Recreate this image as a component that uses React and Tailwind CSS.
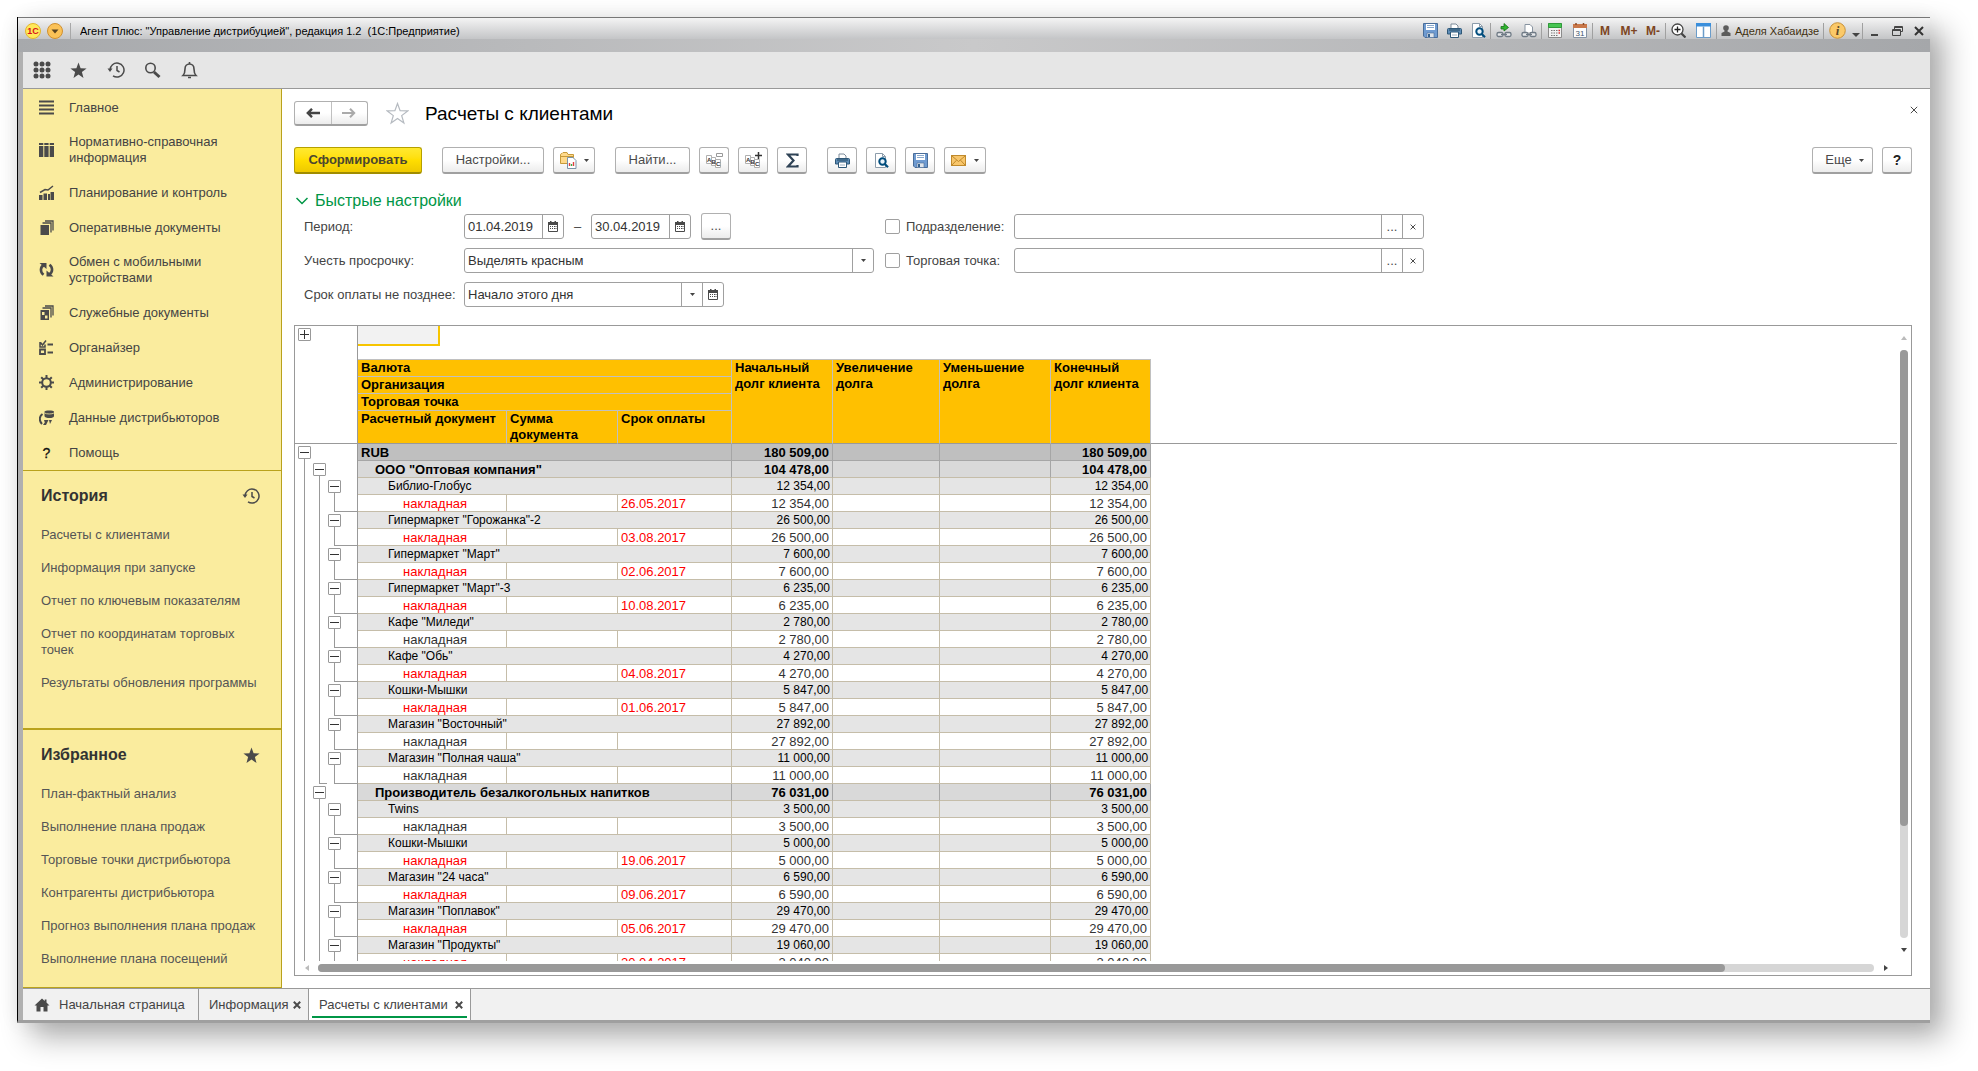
import { useState } from "react";

const menuItems = [
  { icon: "lines", label: "Главное" },
  { icon: "columns", label: "Нормативно-справочная информация" },
  { icon: "chart", label: "Планирование и контроль" },
  { icon: "docs", label: "Оперативные документы" },
  { icon: "sync", label: "Обмен с мобильными устройствами" },
  { icon: "service", label: "Служебные документы" },
  { icon: "organizer", label: "Органайзер" },
  { icon: "gear", label: "Администрирование" },
  { icon: "distributor", label: "Данные дистрибьюторов" },
  { icon: "help", label: "Помощь" },
];

const historyLinks = [
  "Расчеты с клиентами",
  "Информация при запуске",
  "Отчет по ключевым показателям",
  "Отчет по координатам торговых точек",
  "Результаты обновления программы",
];

const favoriteLinks = [
  "План-фактный анализ",
  "Выполнение плана продаж",
  "Торговые точки дистрибьютора",
  "Контрагенты дистрибьютора",
  "Прогноз выполнения плана продаж",
  "Выполнение плана посещений",
];

// date = overdue document, printed in red
const organizations = [
  {
    name: 'ООО "Оптовая компания"',
    sum: "104 478,00",
    points: [
      { name: "Библио-Глобус", sum: "12 354,00", date: "26.05.2017" },
      { name: 'Гипермаркет "Горожанка"-2', sum: "26 500,00", date: "03.08.2017" },
      { name: 'Гипермаркет "Март"', sum: "7 600,00", date: "02.06.2017" },
      { name: 'Гипермаркет "Март"-3', sum: "6 235,00", date: "10.08.2017" },
      { name: 'Кафе "Миледи"', sum: "2 780,00" },
      { name: 'Кафе "Обь"', sum: "4 270,00", date: "04.08.2017" },
      { name: "Кошки-Мышки", sum: "5 847,00", date: "01.06.2017" },
      { name: 'Магазин "Восточный"', sum: "27 892,00" },
      { name: 'Магазин "Полная чаша"', sum: "11 000,00" },
    ],
  },
  {
    name: "Производитель безалкогольных напитков",
    sum: "76 031,00",
    open: true,
    points: [
      { name: "Twins", sum: "3 500,00" },
      { name: "Кошки-Мышки", sum: "5 000,00", date: "19.06.2017" },
      { name: 'Магазин "24 часа"', sum: "6 590,00", date: "09.06.2017" },
      { name: 'Магазин "Поплавок"', sum: "29 470,00", date: "05.06.2017" },
      { name: 'Магазин "Продукты"', sum: "19 060,00", docSum: "3 040,00", date: "20.04.2017" },
    ],
  },
];

// ================= ICONS =================
const StarIcon = ({ size = 17 }) => (
  <svg width={size} height={size} viewBox="0 0 17 17" fill="#4a4a4a">
    <path d="M8.5 0.5 10.6 6.2 16.6 6.4 11.9 10.1 13.5 16 8.5 12.6 3.5 16 5.1 10.1 0.4 6.4 6.4 6.2Z" />
  </svg>
);

const HistoryIcon = () => (
  <svg width="18" height="18" viewBox="0 0 18 18" fill="none" stroke="#4a4a4a" strokeWidth="1.5">
    <path d="M3 9.2A7 7 0 1 1 6 14.8" />
    <path d="M10 5v4.5l2.5 1.5" />
    <path d="M0.5 7.5h5L3 11Z" fill="#4a4a4a" stroke="none" />
  </svg>
);

const AppsIcon = () => (
  <svg width="18" height="18" viewBox="0 0 18 18" fill="#4a4a4a">
    {[3, 9, 15].map((y) =>
      [3, 9, 15].map((x) => <circle key={`${x}${y}`} cx={x} cy={y} r="2.5" />),
    )}
  </svg>
);

const SearchIcon = () => (
  <svg width="17" height="17" viewBox="0 0 17 17" fill="none" stroke="#4a4a4a">
    <circle cx="6.5" cy="6" r="4.7" strokeWidth="1.6" />
    <path d="m10 10 5.5 5" strokeWidth="3" />
  </svg>
);

const BellIcon = () => (
  <svg width="17" height="18" viewBox="0 0 17 18" fill="none" stroke="#4a4a4a" strokeWidth="1.6">
    <path d="M2 14.5h13c-1.8-1.8-2-3.5-2-6.5C13 4.8 11 3 8.5 3S4 4.8 4 8c0 3-.2 4.7-2 6.5Z" />
    <path d="M7 16.5h3M8.5 1v2" />
  </svg>
);

const HomeIcon = () => (
  <svg width="16" height="14" viewBox="0 0 16 14" fill="#4a4a4a">
    <path d="M8 0.5 0.5 7.5h2v6h4V9h3v4.5h4v-6h2l-3-3v-3h-1.8v1.4Z" />
  </svg>
);

const MenuIcon = ({ name }) => {
  const icons = {
    lines: <path d="M0 1.5h15M0 5.5h15M0 9.5h15M0 13.5h15" stroke="#4a4a4a" strokeWidth="2" />,
    columns: (
      <path d="M0 1h4.3v2H0zM5.3 1h4.3v2H5.3zM10.7 1H15v2h-4.3zM0 4h4.3v11H0zM5.3 4h4.3v11H5.3zM10.7 4H15v11h-4.3z" />
    ),
    chart: (
      <>
        <path d="M0 10h3.5v5H0zM4.500 8.500H8V15H4.500zM9 9h2v6H9zM11.500 7H15v8h-3.500z" />
        <path d="M1 7.500 6 4.500l3 .5L14 1" fill="none" stroke="#4a4a4a" strokeWidth="1.500" />
      </>
    ),
    docs: (
      <>
        <path d="M1.5 5H10v10H1.500z" />
        <path d="M3.500 3H12v9.500M6 1h8v9.500" fill="none" stroke="#4a4a4a" strokeWidth="1.300" />
      </>
    ),
    service: (
      <>
        <path d="M1.500 5H10v10H1.500zM3 7v3h2.500V7zM6 10.500v3h2.500v-3z" fillRule="evenodd" />
        <path d="M3.500 3H12v9.500M6 1h8v9.500" fill="none" stroke="#4a4a4a" strokeWidth="1.300" />
      </>
    ),
    sync: (
      <>
        <path d="M5 3C1 5 1 10 4.500 12.800M10 12.500C14 10.500 14 5.500 10.500 2.800" fill="none" stroke="#4a4a4a" strokeWidth="2.600" />
        <path d="M0.500 1h7v6zM14.500 14.500h-7v-6z" />
      </>
    ),
    organizer: (
      <>
        <path d="M1 9.500h5v4.500H1zM8.500 4.500H14M8.500 12.500H14" fill="none" stroke="#4a4a4a" strokeWidth="1.800" />
        <path d="M1 2v5h5V4.500M1.500 2.500l2 2.500L7 0.500" fill="none" stroke="#4a4a4a" strokeWidth="1.500" />
      </>
    ),
    gear: (
      <>
        <circle cx="7.500" cy="7.500" r="4.300" fill="none" stroke="#4a4a4a" strokeWidth="2" />
        <path
          d="M7.500 0v3M7.500 12v3M0 7.500h3M12 7.500h3M2.200 2.200l2.100 2.100M10.700 10.700l2.100 2.100M12.800 2.200l-2.100 2.100M4.300 10.700l-2.100 2.100"
          stroke="#4a4a4a"
          strokeWidth="2"
        />
      </>
    ),
    distributor: (
      <>
        <path d="M5.500 1.500C5.500 0 15 0 15 1.500V6c0 1.500-2 2-4.500 2s-5-.5-5-2z" />
        <path d="M5.500 3c2 1.300 7.500 1.300 9.500 0" fill="none" stroke="#faec9e" strokeWidth="0.800" />
        <path d="M3.500 4C0 6.500 0 11 3 14" fill="none" stroke="#4a4a4a" strokeWidth="2" />
        <path d="M5 10h4.500L7 15H4l1.800-2.500zM10 10h3l-2 4z" />
      </>
    ),
    help: (
      <text x="7.500" y="12.500" textAnchor="middle" fontSize="14" fill="#111" stroke="#111" strokeWidth="0.300">
        ?
      </text>
    ),
  };
  return (
    <svg width="15" height="16" viewBox="0 0 15 16" fill="#4a4a4a" className="shrink-0">
      {icons[name]}
    </svg>
  );
};

const SaveIcon = () => (
  <svg width="15" height="15" viewBox="0 0 15 15">
    <path d="M0.500 0.500h14v14H2l-1.500-1.500z" fill="#6f9bd1" stroke="#4a6d99" />
    <path d="M3 1h9v6H3z" fill="#fff" />
    <path d="M4 2.500h7M4 4.500h7" stroke="#8aa9cc" />
    <path d="M4 10h7v4.500H4z" fill="#dfe5ec" stroke="#4a6d99" strokeWidth="0.600" />
    <path d="M5 11h2v3H5z" fill="#35618f" />
  </svg>
);

const PrintIcon = () => (
  <svg width="15" height="15" viewBox="0 0 15 15">
    <path d="M4 6V1h5l2 2v3" fill="#fff" stroke="#7c8b9a" />
    <path d="M0.500 6.500c0-.6.4-1 1-1h12c.6 0 1 .4 1 1V11h-14z" fill="#5f8db8" stroke="#2f5878" />
    <path d="M2 7h11" stroke="#24485f" />
    <path d="M3.500 9h8v5.500h-8z" fill="#fff" stroke="#2f5878" />
    <path d="M5 12h5" stroke="#9db0c0" />
  </svg>
);

const PreviewIcon = () => (
  <svg width="15" height="15" viewBox="0 0 15 15">
    <path d="M1.500 0.500h7l3 3v11h-10z" fill="#fff" stroke="#8c9cab" />
    <path d="M8.500 0.500v3h3" fill="none" stroke="#8c9cab" />
    <circle cx="8.500" cy="8.500" r="3.200" fill="#eaf4fb" stroke="#004d7d" strokeWidth="2" />
    <path d="m10.800 11 3.200 3.200" stroke="#004d7d" strokeWidth="2.200" />
  </svg>
);

const FolderIcon = () => (
  <svg width="17" height="17" viewBox="0 0 17 17">
    <path d="M0.500 3c0-1 .5-1.500 1.500-1.500L3 0.500h4l1 2h5.500v9h-13z" fill="#ffd98a" stroke="#c79a3a" />
    <path d="M1 4.500h12" stroke="#c79a3a" />
    <path d="M7.500 5.500H13l3 3v8H7.500z" fill="#fff" stroke="#7b93a8" />
    <path d="M9.500 14v-3" stroke="#e04040" strokeWidth="1.400" />
    <path d="M11.500 14v-2" stroke="#3bab4a" strokeWidth="1.400" />
    <path d="M13.500 14v-4" stroke="#e04040" strokeWidth="1.400" />
  </svg>
);

const MailIcon = () => (
  <svg width="15" height="11" viewBox="0 0 15 11" fill="none">
    <rect x="0.500" y="0.500" width="14" height="10" fill="#f8c66b" stroke="#c08a2c" />
    <path d="m1 1 6.500 5.500L14 1M1 10l4.500-4.800M14 10 9.500 5.200" stroke="#c08a2c" />
  </svg>
);

const AbcIcon = ({ plus }) => (
  <svg width="17" height="17" viewBox="0 0 17 17" fill="none">
    <path d="M0.500 3.500h5v8h-5z" fill="#fff" stroke="#b0b0b0" />
    <path d="M5.500 5.500h4v8h-4z" fill="#fff" stroke="#b0b0b0" />
    <path d="M9.500 7.500h5v8h-5z" fill="#fff" stroke="#b0b0b0" />
    <g fill="#333" fontSize="6" fontWeight="bold">
      <text x="1" y="10">A</text>
      <text x="5.500" y="12">B</text>
      <text x="10" y="14">C</text>
    </g>
    {plus ? (
      <path d="M10 3.500h7M13.500 0v7" stroke="#333" strokeWidth="1.500" />
    ) : (
      <path d="M10.500 1.500h6v3h-6z" fill="#fff" stroke="#999" />
    )}
  </svg>
);

const SigmaIcon = () => (
  <svg width="13" height="15" viewBox="0 0 13 15" fill="none" stroke="#2f4356" strokeWidth="2.200">
    <path d="M11.500 3V1.500H2l5.500 6-5.500 6h9.500V12" />
  </svg>
);

const CalendarIcon = () => (
  <svg width="10" height="11" viewBox="0 0 10 11" fill="#4a4a4a">
    <path d="M0.500 2.500v8h9v-8" fill="none" stroke="#4a4a4a" />
    <path d="M0 1h10v3H0zM2 0h1.500v2H2zM6.500 0H8v2H6.500z" />
    <path d="M2 5h1v1H2zM4 5h1v1H4zM6 5h1v1H6zM2 7h1v1H2zM4 7h1v1H4zM6 7h1v1H6zM7.500 5h1v1h-1zM7.500 7h1v1h-1z" />
  </svg>
);

const CaretIcon = () => (
  <svg width="5" height="3" viewBox="0 0 5 3" fill="#444">
    <path d="M0 0h5L2.500 3Z" />
  </svg>
);

const CrossIcon = ({ size = 7, color = "#4a4a4a", weight = 1.5 }) => (
  <svg width={size} height={size} viewBox="0 0 10 10" stroke={color} strokeWidth={(weight * 10) / size}>
    <path d="m1 1 8 8M9 1 1 9" />
  </svg>
);

const LinkIcon = ({ arrow }) => (
  <svg width="16" height="16" viewBox="0 0 16 16" fill="none">
    {arrow ? (
      <path d="M5 3.500h3v-3l4.500 4L8 8V6H5z" fill="#2fb52f" stroke="#177017" strokeWidth="0.800" />
    ) : (
      <path d="M4 9V1.500h5L11.500 4v5" fill="#fff" stroke="#8793a0" />
    )}
    <rect x="1" y="9.500" width="6" height="4" rx="1.500" fill="#e8eaec" stroke="#6f7a85" strokeWidth="1.300" />
    <rect x="9" y="9.500" width="6" height="4" rx="1.500" fill="#e8eaec" stroke="#6f7a85" strokeWidth="1.300" />
    <path d="M5 11.500h6" stroke="#6f7a85" strokeWidth="1.300" />
  </svg>
);

const CalcIcon = () => (
  <svg width="14" height="15" viewBox="0 0 14 15">
    <path d="M0.500 0.500h13v14h-13z" fill="#f2f2f2" stroke="#8b8b8b" />
    <path d="M0.500 0.500h13v4h-13z" fill="#47c552" stroke="#2f9a39" />
    <path d="M3 7.500h7M3 10h7M3 12.500h7" stroke="#777" strokeDasharray="1.500 1" />
    <path d="M10.500 7.500H12M10.500 10H12" stroke="#e03030" strokeWidth="1.300" />
  </svg>
);

const DateIcon = () => (
  <svg width="14" height="15" viewBox="0 0 14 15">
    <path d="M0.500 1.500h13v13h-13z" fill="#fdfdfd" stroke="#8593a3" />
    <path d="M0 1h14v4H0z" fill="#c9784a" />
    <path d="M3 0v2M10.500 0v2" stroke="#8a4a25" strokeWidth="1.500" />
    <text x="7" y="12.500" fontSize="8" textAnchor="middle" fill="#3f566e">31</text>
  </svg>
);

const ZoomIcon = () => (
  <svg width="15" height="15" viewBox="0 0 15 15" fill="none" stroke="#444">
    <circle cx="6.500" cy="6.500" r="5.500" fill="#fff" strokeWidth="1.300" />
    <path d="M3.500 6.500h6M6.500 3.500v6" stroke="#222" strokeWidth="1.300" />
    <path d="m10.500 10.500 4 4" strokeWidth="2.200" />
  </svg>
);

const PanesIcon = () => (
  <svg width="15" height="15" viewBox="0 0 15 15">
    <path d="M0.500 0.500h14v14h-14z" fill="#fff" stroke="#6b9cc9" />
    <path d="M0 0h15v3.500H0z" fill="#3a8fdc" />
    <path d="M7.500 3.500v11" stroke="#6b9cc9" strokeWidth="1.500" />
  </svg>
);

const UserIcon = () => (
  <svg width="10" height="11" viewBox="0 0 10 11" fill="#5c5c5c">
    <circle cx="5" cy="3" r="2.800" />
    <path d="M3.500 5h3v1.500l3 1.500v3h-9V8l3-1.500z" />
  </svg>
);

// ================= SMALL CONTROLS =================
const TitleButton = ({ label, className = "w-6", children }) => (
  <button aria-label={label} className={`flex h-5 items-center justify-center ${className}`}>
    {children}
  </button>
);

const TitleSeparator = () => <span className="h-4 w-px bg-[#a0a0a0]" />;

const ToolButton = ({ label, className = "w-[30px]", children }) => (
  <button
    aria-label={label}
    className={`flex h-[27px] shrink-0 items-center justify-center rounded-[3px] border border-b-2 border-[#b0b0b0] border-b-[#a0a0a0] bg-linear-to-b from-white from-50% to-[#ececec] text-[#4a4a4a] ${className}`}
  >
    {children}
  </button>
);

const FieldButton = ({ label, children }) => (
  <button
    aria-label={label}
    className="flex w-[21px] shrink-0 items-center justify-center border-l border-[#a0a0a0] text-[#4a4a4a]"
  >
    {children}
  </button>
);

const fieldBox = "flex h-[25px] rounded-[3px] border border-[#a0a0a0] bg-white";

const DateField = ({ id, label, value }) => (
  <div className={`${fieldBox} w-[100px]`}>
    <input
      id={id}
      aria-label={label}
      defaultValue={value}
      className="w-0 min-w-0 flex-1 px-[3px] text-[#333] outline-none"
    />
    <FieldButton label="Календарь">
      <CalendarIcon />
    </FieldButton>
  </div>
);

const CheckFilter = ({ id, label }) => {
  const [checked, setChecked] = useState(false);

  return (
    <div className="flex h-[25px] items-center">
      <input
        id={id}
        type="checkbox"
        checked={checked}
        onChange={() => setChecked(!checked)}
        className="mr-1.5 size-[15px] appearance-none rounded-[2px] border border-[#a0a0a0] checked:bg-[#009646]"
      />
      <label htmlFor={id} className="w-[108px]">
        {label}
      </label>
      <div className={`${fieldBox} w-[410px]`}>
        <input aria-label={label} className="min-w-0 flex-1 px-[3px] outline-none" />
        <FieldButton label="Выбрать">...</FieldButton>
        <FieldButton label="Очистить">
          <CrossIcon size={6} weight={1} />
        </FieldButton>
      </div>
    </div>
  );
};

const SideLinks = ({ title, icon, links, className = "" }) => (
  <section className={`min-h-0 flex-1 border-[#b9a21c] px-[18px] pt-[15px] ${className}`}>
    <div className="flex items-center justify-between">
      <h2 className="text-base leading-5 font-bold text-[#333]">{title}</h2>
      <span className="flex w-6 justify-center">{icon}</span>
    </div>
    <ul className="mt-[21px] space-y-[17px]">
      {links.map((link) => (
        <li key={link} className="leading-4">
          <a href="#" className="block text-[#555]">
            {link}
          </a>
        </li>
      ))}
    </ul>
  </section>
);

// ================= REPORT TREE =================
const ToggleBox = ({ plus }) => (
  <button
    aria-label={plus ? "Развернуть" : "Свернуть"}
    className="flex size-[13px] shrink-0 items-center justify-center rounded-[1px] border border-[#999] bg-white"
  >
    <svg width="9" height="9" viewBox="0 0 9 9" stroke="#333">
      <path d={plus ? "M0 4.500h9M4.500 0v9" : "M0 4.500h9"} />
    </svg>
  </button>
);

// one 15px slot per level: box, line, corner or nothing
const Tree = ({ slots }) => (
  <div className="flex h-[17px] pl-[2px]">
    {slots.map((slot, i) => {
      if (slot === "box")
        return (
          <div key={i} className="flex w-[15px] flex-col items-center pt-[2px]">
            <ToggleBox />
            <span className="w-px flex-1 bg-[#999]" />
          </div>
        );
      if (slot === "line")
        return (
          <div key={i} className="flex w-[15px] justify-center">
            <span className="w-px bg-[#999]" />
          </div>
        );
      return (
        <div key={i} className={i === 2 ? "flex flex-1 pl-[7px]" : "flex w-[15px] pl-[7px]"}>
          <span className="flex-1 border-b border-l border-[#999]" />
        </div>
      );
    })}
    {/* the closed group line runs on under the last slot */}
  </div>
);

const rowStyles = {
  total: "bg-[#bfbfbf] font-bold text-black",
  org: "bg-[#d9d9d9] font-bold text-black",
  point: "bg-[#e5e5e5] text-xs leading-4 text-black",
  doc: "bg-white text-[#333]",
};

const borderStyles = {
  total: "border-r border-b border-[#a6a6a6]",
  org: "border-r border-b border-r-[#a6a6a6] border-b-[#c5bda9]",
  point: "border-r border-b border-[#c5bda9]",
  doc: "border-r border-b border-[#c5bda9]",
};

const indents = { total: "pl-[3px]", org: "pl-[17px]", point: "pl-[30px]", doc: "pl-[45px]" };

const ReportRow = ({ type, slots, name, sum, date }) => {
  const border = borderStyles[type];
  const fill = rowStyles[type];
  const line = type === "point" ? "" : "pt-px leading-[15px]";
  const pad = type === "point" ? "pr-[2px]" : "pr-[3px]";
  const color = date ? "text-[#f00]" : "text-[#333]";

  return (
    <tr className="h-[17px]">
      <td className="border-r border-[#999] p-0">
        <Tree slots={slots} />
      </td>
      {type === "doc" ? (
        <>
          <td className={`${border} ${indents.doc} ${line} ${color}`}>{name}</td>
          <td className={border} />
          <td className={`${border} ${line} pl-[3px] ${color}`}>{date}</td>
        </>
      ) : (
        <td colSpan={3} className={`${border} ${fill} ${line} ${indents[type]}`}>
          {name}
        </td>
      )}
      <td className={`${border} ${fill} ${line} ${pad} text-right`}>{sum}</td>
      <td className={`${border} ${fill}`} />
      <td className={`${border} ${fill}`} />
      <td className={`${border} ${fill} ${line} ${pad} text-right`}>{sum}</td>
      <td />
    </tr>
  );
};

const headCell = "border-r border-b border-[#c0c0c0] bg-[#ffc000] pl-[3px] text-left align-top font-bold text-black";

const Report = () => (
  <table className="w-full table-fixed border-separate border-spacing-0">
    <colgroup>
      <col className="w-[63px]" />
      <col className="w-[149px]" />
      <col className="w-[111px]" />
      <col className="w-[114px]" />
      <col className="w-[101px]" />
      <col className="w-[107px]" />
      <col className="w-[111px]" />
      <col className="w-[100px]" />
      <col />
    </colgroup>
    <thead className="leading-4">
      <tr className="h-[34px]">
        <td rowSpan={5} className="border-r border-b border-[#999] pt-[2px] pl-[3px] align-top">
          <ToggleBox plus />
        </td>
        <td colSpan={7} className="border-b border-[#c0c0c0] p-0 align-top">
          <div className="h-5 w-[82px] border-r-2 border-b-2 border-[#f7c500] bg-[#f2f2f2]" />
        </td>
        <td rowSpan={5} className="border-b border-[#999]" />
      </tr>
      <tr className="h-[17px]">
        <th colSpan={3} className={headCell}>Валюта</th>
        <th rowSpan={4} className={`${headCell} border-b-[#999]`}>Начальный долг клиента</th>
        <th rowSpan={4} className={`${headCell} border-b-[#999]`}>
          Увеличение
          <br />
          долга
        </th>
        <th rowSpan={4} className={`${headCell} border-b-[#999]`}>
          Уменьшение
          <br />
          долга
        </th>
        <th rowSpan={4} className={`${headCell} border-b-[#999]`}>Конечный долг клиента</th>
      </tr>
      <tr className="h-[17px]">
        <th colSpan={3} className={headCell}>Организация</th>
      </tr>
      <tr className="h-[17px]">
        <th colSpan={3} className={headCell}>Торговая точка</th>
      </tr>
      <tr className="h-[33px]">
        <th className={`${headCell} border-b-[#999] whitespace-nowrap`}>Расчетный документ</th>
        <th className={`${headCell} border-b-[#999]`}>Сумма документа</th>
        <th className={`${headCell} border-b-[#999]`}>Срок оплаты</th>
      </tr>
    </thead>
    <tbody>
      <ReportRow type="total" name="RUB" sum="180 509,00" slots={["box"]} />
      {organizations.map((org) => [
        <ReportRow key={org.name} type="org" name={org.name} sum={org.sum} slots={["line", "box"]} />,
        org.points.map((point, i) => {
          const last = !org.open && i === org.points.length - 1;
          return [
            <ReportRow
              key={`${point.name}-group`}
              type="point"
              name={point.name}
              sum={point.sum}
              slots={["line", "line", "box"]}
            />,
            <ReportRow
              key={`${point.name}-doc`}
              type="doc"
              name="накладная"
              sum={point.docSum || point.sum}
              date={point.date}
              slots={["line", last ? "corner" : "line", "corner"]}
            />,
          ];
        }),
      ])}
    </tbody>
  </table>
);

// ================= PAGE PARTS =================
const TitleBar = () => (
  <header className="shrink-0 border-t border-[#777]">
    <div className="flex h-[21px] items-center bg-linear-to-b from-[#f4f4f4] to-[#c4c5c7] pt-1">
      <TitleButton label="1С" className="w-[29px]">
        <svg width="16" height="16" viewBox="0 0 16 16">
          <circle cx="8" cy="8" r="7.500" fill="#ffe85a" stroke="#e3b62c" />
          <text x="8" y="11" fontSize="9" fontWeight="bold" textAnchor="middle" fill="#d8121a">1С</text>
        </svg>
      </TitleButton>
      <TitleButton label="Главное меню" className="w-4">
        <svg width="16" height="16" viewBox="0 0 16 16">
          <circle cx="8" cy="8" r="7.500" fill="#fbc257" stroke="#d09030" />
          <path d="M4.500 6.500h7L8 10.500Z" fill="#5a4420" />
        </svg>
      </TitleButton>
      <span className="mr-[9px] ml-[7px] h-4 w-px bg-[#a8a8a8]" />
      <h1 className="flex-1 truncate text-[11px] leading-4 whitespace-pre text-black">
        Агент Плюс: "Управление дистрибуцией", редакция 1.2  (1С:Предприятие)
      </h1>
      <div className="flex items-center">
        <TitleButton label="Сохранить"><SaveIcon /></TitleButton>
        <TitleButton label="Печать"><PrintIcon /></TitleButton>
        <TitleButton label="Просмотр"><PreviewIcon /></TitleButton>
        <TitleSeparator />
        <TitleButton label="Получить ссылку" className="w-[25px]"><LinkIcon arrow /></TitleButton>
        <TitleButton label="Перейти по ссылке" className="w-[25px]"><LinkIcon /></TitleButton>
        <TitleSeparator />
        <TitleButton label="Калькулятор" className="w-[25px]"><CalcIcon /></TitleButton>
        <TitleButton label="Календарь" className="w-[25px]"><DateIcon /></TitleButton>
        <TitleSeparator />
        {["M", "M+", "M-"].map((text) => (
          <TitleButton key={text} label={text}>
            <span className="text-xs font-bold text-[#7d4522]">{text}</span>
          </TitleButton>
        ))}
        <TitleSeparator />
        <TitleButton label="Масштаб" className="w-[25px]"><ZoomIcon /></TitleButton>
        <TitleButton label="Панели" className="w-[25px]"><PanesIcon /></TitleButton>
        <TitleSeparator />
        <button className="flex w-[106px] items-center justify-center gap-1 text-[11px] whitespace-nowrap text-[#3f3010]">
          <UserIcon />
          Аделя Хабаидзе
        </button>
        <TitleSeparator />
        <TitleButton label="О программе" className="w-[26px]">
          <svg width="17" height="17" viewBox="0 0 17 17">
            <circle cx="8.500" cy="8.500" r="7.800" fill="#fbc968" stroke="#c8923a" />
            <text x="8.500" y="13" fontSize="13" fontWeight="bold" fontStyle="italic" fontFamily="Liberation Serif" textAnchor="middle" fill="#5c4a2a">i</text>
          </svg>
        </TitleButton>
        <TitleButton label="Еще" className="w-3 pt-2">
          <svg width="8" height="4" viewBox="0 0 8 4" fill="#444"><path d="M0 0h8L4 4Z" /></svg>
        </TitleButton>
        <TitleSeparator />
        <TitleButton label="Свернуть" className="w-[23px] pt-2">
          <span className="h-[2px] w-[7px] bg-[#444]" />
        </TitleButton>
        <TitleButton label="Восстановить" className="w-[22px]">
          <svg width="11" height="10" viewBox="0 0 11 10" fill="none" stroke="#444">
            <path d="M2.500 3V0.500h8v5H8M2.500 1.500h8" />
            <path d="M0.500 3.500h8v6h-8zM0.500 4.500h8" />
          </svg>
        </TitleButton>
        <TitleButton label="Закрыть" className="w-[22px]">
          <CrossIcon size={10} color="#333" weight={2} />
        </TitleButton>
      </div>
    </div>
    <div className="h-[13px] bg-linear-to-r from-[#a7a9ac] via-[#c9c9ca] to-[#a5a7aa]" />
  </header>
);

const Sidebar = () => (
  <aside className="flex w-[259px] shrink-0 flex-col border-r border-b border-[#b9a21c] bg-[#faec9e]">
    <nav className="border-b border-[#b9a21c] pt-px">
      {menuItems.map((item) => (
        <a
          key={item.label}
          href="#"
          className="flex min-h-[35px] items-center gap-[15px] py-[9px] pr-10 pl-4 leading-4 text-[#444]"
        >
          <MenuIcon name={item.icon} />
          {item.label}
        </a>
      ))}
    </nav>
    <SideLinks title="История" icon={<HistoryIcon />} links={historyLinks} className="border-b-2" />
    <SideLinks title="Избранное" icon={<StarIcon />} links={favoriteLinks} />
  </aside>
);

const Toolbar = () => (
  <div className="mt-[21px] flex items-center gap-5">
    <button className="h-[27px] w-32 shrink-0 rounded-[3px] border border-b-2 border-[#b5a000] border-b-[#a08c00] bg-linear-to-b from-[#ffe92e] via-[#ffde00] to-[#eec900] font-bold text-[#4a4630]">
      Сформировать
    </button>
    <div className="flex gap-[9px]">
      <ToolButton label="Настройки" className="w-[102px]">Настройки...</ToolButton>
      <ToolButton label="Варианты отчета" className="w-[42px] gap-[7px]">
        <FolderIcon />
        <CaretIcon />
      </ToolButton>
    </div>
    <div className="flex gap-[9px]">
      <ToolButton label="Найти" className="w-[75px]">Найти...</ToolButton>
      <ToolButton label="Свернуть группы"><AbcIcon /></ToolButton>
      <ToolButton label="Развернуть группы"><AbcIcon plus /></ToolButton>
      <ToolButton label="Сумма"><SigmaIcon /></ToolButton>
    </div>
    <div className="flex gap-[9px]">
      <ToolButton label="Печать"><PrintIcon /></ToolButton>
      <ToolButton label="Предварительный просмотр"><PreviewIcon /></ToolButton>
      <ToolButton label="Сохранить"><SaveIcon /></ToolButton>
      <ToolButton label="Отправить" className="w-[42px] gap-2">
        <MailIcon />
        <CaretIcon />
      </ToolButton>
    </div>
    <div className="ml-auto flex gap-[9px]">
      <ToolButton label="Еще" className="w-[61px] gap-[7px] pl-1">
        Еще
        <CaretIcon />
      </ToolButton>
      <ToolButton label="Справка">
        <span className="text-sm font-bold text-[#222]">?</span>
      </ToolButton>
    </div>
  </div>
);

const Filters = () => (
  <div className="mt-[2px] flex gap-[11px] pl-[10px] text-[#444]">
    <div className="w-[570px] shrink-0 space-y-[9px]">
      <div className="flex h-[25px] items-center">
        <label htmlFor="from" className="w-40">Период:</label>
        <DateField id="from" label="Начало периода" value="01.04.2019" />
        <span className="w-[27px] text-center">–</span>
        <DateField id="to" label="Конец периода" value="30.04.2019" />
        <ToolButton label="Выбрать период" className="ml-[10px] w-[30px]">...</ToolButton>
      </div>
      <div className="flex h-[25px] items-center">
        <label htmlFor="overdue" className="w-40">Учесть просрочку:</label>
        <div className={`${fieldBox} relative flex-1`}>
          <select id="overdue" className="flex-1 appearance-none px-[3px] text-[#333] outline-none">
            <option>Выделять красным</option>
            <option>Не учитывать</option>
          </select>
          <span className="pointer-events-none absolute inset-y-0 right-0 flex w-[21px] items-center justify-center border-l border-[#a0a0a0]">
            <CaretIcon />
          </span>
        </div>
      </div>
      <div className="flex h-[25px] items-center">
        <label htmlFor="due" className="w-40 whitespace-nowrap">Срок оплаты не позднее:</label>
        <div className={`${fieldBox} w-[260px]`}>
          <div className="relative flex flex-1">
            <select id="due" className="flex-1 appearance-none px-[3px] text-[#333] outline-none">
              <option>Начало этого дня</option>
              <option>Произвольная дата</option>
            </select>
            <span className="pointer-events-none absolute inset-y-0 right-0 flex w-[21px] items-center justify-center border-l border-[#a0a0a0]">
              <CaretIcon />
            </span>
          </div>
          <FieldButton label="Календарь">
            <CalendarIcon />
          </FieldButton>
        </div>
      </div>
    </div>
    <div className="space-y-[9px]">
      <CheckFilter id="department" label="Подразделение:" />
      <CheckFilter id="point" label="Торговая точка:" />
    </div>
  </div>
);

const ReportView = () => (
  <div className="mt-[18px] flex min-h-0 flex-1 flex-col border border-[#999]">
    <div className="flex min-h-0 flex-1">
      <div className="min-w-0 flex-1 overflow-hidden">
        <Report />
      </div>
      <div className="flex w-[14px] flex-col items-center">
        <span className="flex h-6 items-center">
          <svg width="6" height="4" viewBox="0 0 6 4" fill="#bbb"><path d="M0 4h6L3 0Z" /></svg>
        </span>
        <div className="w-2 flex-1 rounded-full bg-[#d6d6d6]">
          <div className="h-[81%] rounded-full bg-[#999]" />
        </div>
        <span className="flex h-[23px] items-center">
          <svg width="6" height="4" viewBox="0 0 6 4" fill="#444"><path d="M0 0h6L3 4Z" /></svg>
        </span>
      </div>
    </div>
    <div className="flex h-[14px] items-center">
      <span className="flex w-[23px] justify-center">
        <svg width="4" height="6" viewBox="0 0 4 6" fill="#bbb"><path d="M4 0v6L0 3Z" /></svg>
      </span>
      <div className="h-2 flex-1 rounded-full bg-[#d6d6d6]">
        <div className="h-2 w-[90.4%] rounded-full bg-[#999]" />
      </div>
      <span className="flex w-[37px] pl-[10px]">
        <svg width="4" height="6" viewBox="0 0 4 6" fill="#444"><path d="M0 0v6l4-3Z" /></svg>
      </span>
    </div>
  </div>
);

const TabBar = () => (
  <footer className="flex h-8 shrink-0 border-t border-[#999] bg-[#f1f1f1] text-[#444]">
    <button className="flex w-[176px] items-center gap-[9px] border-r border-[#999] pl-[11px]">
      <HomeIcon />
      Начальная страница
    </button>
    <div className="flex w-[110px] items-center justify-between border-r border-[#999] pr-[7px] pl-[10px]">
      <button>Информация</button>
      <button aria-label="Закрыть вкладку"><CrossIcon size={8} weight={2} /></button>
    </div>
    <div className="relative flex w-[162px] items-center justify-between border-r border-[#999] bg-white pr-[7px] pl-[10px]">
      <button>Расчеты с клиентами</button>
      <button aria-label="Закрыть вкладку"><CrossIcon size={8} weight={2} /></button>
      <span className="absolute inset-x-[3px] bottom-[2px] h-[2px] bg-[#009646]" />
    </div>
  </footer>
);

export default function App() {
  const [open, setOpen] = useState(true);

  return (
    <div className="flex h-screen bg-white pt-[17px] pr-12 pb-12 pl-[17px] font-['Liberation_Sans',Arial,sans-serif] text-[13px] leading-4">
      <div className="flex min-w-0 flex-1 flex-col border-b-[3px] border-l border-b-[#9f9f9f] border-l-black bg-white shadow-[14px_14px_28px_rgba(0,0,0,0.32),0_0_20px_rgba(0,0,0,0.06)]">
        <TitleBar />
        <div className="flex min-h-0 flex-1 flex-col border-l-[5px] border-[#b0b0b0]">
          <div className="flex h-[37px] shrink-0 items-center border-b border-[#999] bg-[#e6e6e6]">
            {[
              ["Разделы", <AppsIcon key="i" />],
              ["Избранное", <StarIcon key="i" />],
              ["История", <HistoryIcon key="i" />],
              ["Поиск", <SearchIcon key="i" />],
              ["Оповещения", <BellIcon key="i" />],
            ].map(([label, icon]) => (
              <button key={label} aria-label={label} className="flex w-[37px] justify-center">
                {icon}
              </button>
            ))}
          </div>

          <div className="flex min-h-0 flex-1">
            <Sidebar />

            <main className="flex min-w-0 flex-1 flex-col pt-3 pr-[18px] pb-3 pl-3">
              <div className="flex h-[25px] items-center">
                <div className="flex h-[25px] w-[74px] rounded-[3px] border border-b-2 border-[#b0b0b0] border-b-[#a0a0a0] bg-linear-to-b from-white from-50% to-[#ececec]">
                  <button aria-label="Назад" className="flex flex-1 items-center justify-center border-r border-[#c0c0c0]">
                    <svg width="14" height="10" viewBox="0 0 14 10" fill="none" stroke="#444" strokeWidth="2.400">
                      <path d="M14 5H2M6 0.800 1.800 5 6 9.200" />
                    </svg>
                  </button>
                  <button aria-label="Вперед" className="flex flex-1 items-center justify-center">
                    <svg width="14" height="10" viewBox="0 0 14 10" fill="none" stroke="#aaa" strokeWidth="2">
                      <path d="M0 5h12M8 0.800 12.200 5 8 9.200" />
                    </svg>
                  </button>
                </div>
                <button aria-label="В избранное" className="ml-[18px]">
                  <svg width="23" height="23" viewBox="0 0 23 23" fill="none" stroke="#b5bac0" strokeWidth="1.200">
                    <path d="m11.500 1.500 2.600 7.200 7.600.2-6 4.700 2.200 7.400-6.400-4.400L5.100 21l2.200-7.400-6-4.700 7.600-.2z" />
                  </svg>
                </button>
                <h2 className="ml-4 text-[19px] leading-6 text-black">Расчеты с клиентами</h2>
                <button aria-label="Закрыть" className="mr-[-11px] ml-auto self-start p-[5px]">
                  <CrossIcon size={8} weight={1} />
                </button>
              </div>

              <Toolbar />

              <button
                onClick={() => setOpen(!open)}
                className="mt-4 flex h-[22px] items-center gap-[7px] self-start pl-[2px] text-base text-[#009646]"
              >
                <svg width="12" height="8" viewBox="0 0 12 8" fill="none" stroke="#009646" strokeWidth="1.500">
                  <path d="m0.500 1 5.500 5.500L11.500 1" />
                </svg>
                Быстрые настройки
              </button>
              {open && <Filters />}

              <ReportView />
            </main>
          </div>

          <TabBar />
        </div>
      </div>
    </div>
  );
}
